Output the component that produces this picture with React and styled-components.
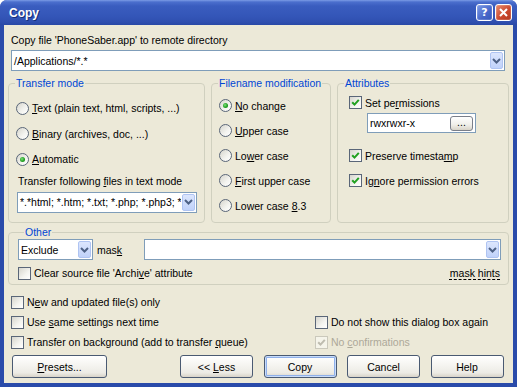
import React from "react";
import styled, { createGlobalStyle } from "styled-components";

const GlobalStyle = createGlobalStyle`
  html, body {
    margin: 0;
    padding: 0;
    background: #ffffff;
  }
  body {
    font-family: "Liberation Sans", Arial, sans-serif;
    font-size: 10.5px;
    color: #000;
  }
`;

const Check = ({ disabled }) => (
  <svg width="9" height="9" viewBox="0 0 9 9">
    <path
      d="M1.2 4.2 L3.5 6.6 L7.8 1.8"
      fill="none"
      stroke={disabled ? "#BEBCAF" : "#21A121"}
      strokeWidth="2"
    />
  </svg>
);

const Chevron = () => (
  <svg width="9" height="6" viewBox="0 0 9 6">
    <path d="M1 1 L4.5 4.5 L8 1" fill="none" stroke="#4D6185" strokeWidth="2" />
  </svg>
);

function Combo({ text, w, m, fill }) {
  return (
    <Field $w={w} $m={m} $fill={fill}>
      <FieldText>{text}</FieldText>
      <DropBtn>
        <Chevron />
      </DropBtn>
    </Field>
  );
}

function RadioOpt({ checked, children }) {
  return (
    <Option>
      <Radio $checked={checked} />
      <Label>{children}</Label>
    </Option>
  );
}

function CheckOpt({ checked, disabled, children }) {
  return (
    <Option $disabled={disabled}>
      <Box $disabled={disabled}>{checked && <Check disabled={disabled} />}</Box>
      <Label>{children}</Label>
    </Option>
  );
}

export default function App() {
  return (
    <>
      <GlobalStyle />
      <Window>
        <TitleBar>
          <Title>Copy</Title>
          <CapBtn>?</CapBtn>
          <CapBtn $close>
            <svg width="9" height="9" viewBox="0 0 9 9">
              <path d="M1 1 L8 8 M8 1 L1 8" stroke="#fff" strokeWidth="2" />
            </svg>
          </CapBtn>
        </TitleBar>
        <Body>
          <Caption>Copy file 'PhoneSaber.app' to remote directory</Caption>
          <Combo text="/Applications/*.*" m="3px 4px 0 3px" />

          <GroupRow>
            <Group $w={197}>
              <Legend>Transfer mode</Legend>
              <Stack $pad="10px 0 0 7px" $gap={9.5}>
                <RadioOpt>
                  <Key>T</Key>ext (plain text, html, scripts, ...)
                </RadioOpt>
                <RadioOpt>
                  <Key>B</Key>inary (archives, doc, ...)
                </RadioOpt>
                <RadioOpt checked>
                  <Key>A</Key>utomatic
                </RadioOpt>
              </Stack>
              <SubCaption>
                Transfer following <Key>f</Key>iles in text mode
              </SubCaption>
              <Combo text="*.*html; *.htm; *.txt; *.php; *.php3; *" m="4px 7px 0 8px" />
            </Group>

            <Group $w={120}>
              <Legend>Filename modification</Legend>
              <Stack $pad="7.5px 0 0 7px" $gap={9}>
                <RadioOpt checked>
                  <Key>N</Key>o change
                </RadioOpt>
                <RadioOpt>
                  <Key>U</Key>pper case
                </RadioOpt>
                <RadioOpt>
                  Lo<Key>w</Key>er case
                </RadioOpt>
                <RadioOpt>
                  <Key>F</Key>irst upper case
                </RadioOpt>
                <RadioOpt>
                  Lower case <Key>8</Key>.3
                </RadioOpt>
              </Stack>
            </Group>

            <Group $w={172}>
              <Legend>Attributes</Legend>
              <Stack $pad="4.5px 0 0 11px" $gap={0}>
                <CheckOpt checked>
                  Set pe<Key>r</Key>missions
                </CheckOpt>
                <PermEdit>
                  <FieldText>rwxrwxr-x</FieldText>
                  <SmallBtn>
                    <span>...</span>
                  </SmallBtn>
                </PermEdit>
                <Spacer $h={14.5} />
                <CheckOpt checked>
                  Preserve timesta<Key>m</Key>p
                </CheckOpt>
                <Spacer $h={9} />
                <CheckOpt checked>
                  Ig<Key>n</Key>ore permission errors
                </CheckOpt>
              </Stack>
            </Group>
          </GroupRow>

          <OtherGroup>
            <Legend>Other</Legend>
            <MaskRow>
              <Combo text="Exclude" w={75} />
              <MaskLabel>
                mas<Key>k</Key>
              </MaskLabel>
              <Combo text="" fill />
            </MaskRow>
            <HintRow>
              <CheckOpt>
                Clear source file 'Archi<Key>v</Key>e' attribute
              </CheckOpt>
              <Hints>mask hints</Hints>
            </HintRow>
          </OtherGroup>

          <Options>
            <CheckOpt>
              N<Key>e</Key>w and updated file(s) only
            </CheckOpt>
            <span />
            <CheckOpt>
              Use <Key>s</Key>ame settings next time
            </CheckOpt>
            <CheckOpt>Do not show this dialog box again</CheckOpt>
            <CheckOpt>
              Transfer on background (add to transfer <Key>q</Key>ueue)
            </CheckOpt>
            <CheckOpt checked disabled>
              No <Key>c</Key>onfirmations
            </CheckOpt>
          </Options>

          <ButtonBar>
            <Button $w={95}>
              <span>
                <Key>P</Key>resets...
              </span>
            </Button>
            <Grow />
            <Button>
              <span>
                &lt;&lt; <Key>L</Key>ess
              </span>
            </Button>
            <Button $default>
              <span>Copy</span>
            </Button>
            <Button>
              <span>Cancel</span>
            </Button>
            <Button>
              <span>Help</span>
            </Button>
          </ButtonBar>
        </Body>
      </Window>
    </>
  );
}

const Window = styled.div`
  width: 517px;
  height: 387px;
  display: flex;
  flex-direction: column;
  background: #2A4BAA;
  border-radius: 7px 7px 0 0;
  overflow: hidden;
`;

const TitleBar = styled.div`
  flex: none;
  height: 25px;
  display: flex;
  align-items: center;
  gap: 2px;
  padding: 0 5px 0 9px;
  background: linear-gradient(
    #7C9CE6 0px,
    #4B6FCD 2px,
    #3A5DBF 6px,
    #3456B8 16px,
    #2F4FAF 22px,
    #2848A6 25px
  );
`;

const Title = styled.div`
  flex: 1;
  color: #fff;
  font: bold 12px "Liberation Sans", Arial, sans-serif;
  text-shadow: 1px 1px 0 #16307A;
  padding-top: 1px;
`;

const CapBtn = styled.div`
  width: 15px;
  height: 15px;
  border: 1px solid #fff;
  border-radius: 3px;
  display: flex;
  align-items: center;
  justify-content: center;
  color: #fff;
  font: bold 11px "DejaVu Sans", sans-serif;
  background: ${(p) =>
    p.$close
      ? "linear-gradient(135deg, #E98C6E, #C9462C 60%, #B23A22)"
      : "linear-gradient(135deg, #7C9AE6, #4767C9 60%, #3858BA)"};
  box-shadow: inset 0 0 0 1px rgba(255, 255, 255, 0.15);
`;

const Body = styled.div`
  flex: 1;
  margin: 0 4px 4px;
  padding: 9px 4px 0;
  background: #ECE9D8;
  display: flex;
  flex-direction: column;
`;

const Caption = styled.div`
  line-height: 13px;
  height: 13px;
  margin-left: 3px;
`;

const SubCaption = styled.div`
  line-height: 13px;
  height: 13px;
  margin: 7.5px 0 0 9px;
  white-space: nowrap;
`;

const Field = styled.div`
  display: flex;
  align-items: center;
  box-sizing: border-box;
  height: 21px;
  flex: ${(p) => (p.$fill ? "1 1 0" : "none")};
  width: ${(p) => (p.$w ? `${p.$w}px` : "auto")};
  min-width: 0;
  background: #fff;
  border: 1px solid #7F9DB9;
  margin: ${(p) => p.$m || 0};
  overflow: hidden;
`;

const FieldText = styled.span`
  flex: 1;
  min-width: 0;
  padding-left: 2px;
  white-space: nowrap;
  overflow: hidden;
`;

const DropBtn = styled.span`
  flex: none;
  box-sizing: border-box;
  width: 13px;
  height: 17px;
  margin: 0 1px 0 1px;
  border: 1px solid #AFC4F2;
  border-radius: 2px;
  background: linear-gradient(#DCE6FD, #C0D2FA);
  display: flex;
  align-items: center;
  justify-content: center;
`;

const GroupRow = styled.div`
  display: flex;
  gap: 6px;
  height: 146px;
  flex-shrink: 0;
  margin-top: 6px;
`;

const Group = styled.fieldset`
  box-sizing: border-box;
  margin: 0;
  padding: 0;
  min-width: 0;
  width: ${(p) => p.$w}px;
  border: 1px solid #D0D0BF;
  border-radius: 4px;
  display: flex;
  flex-direction: column;
`;

const OtherGroup = styled(Group)`
  width: auto;
  height: 59px;
  flex-shrink: 0;
  margin-top: 3px;
  padding: 0 7px 0 9px;
`;

const Legend = styled.legend`
  margin-left: 6px;
  padding: 0 1px;
  line-height: 13px;
  color: #0046D5;
`;

const Stack = styled.div`
  display: flex;
  flex-direction: column;
  align-items: flex-start;
  gap: ${(p) => p.$gap}px;
  padding: ${(p) => p.$pad};
`;

const Spacer = styled.div`
  height: ${(p) => p.$h}px;
`;

const Option = styled.div`
  display: flex;
  align-items: center;
  height: 16px;
  white-space: nowrap;
  color: ${(p) => (p.$disabled ? "#ACA899" : "#000")};
`;

const Label = styled.span`
  margin-left: 3px;
`;

const Key = styled.u`
  text-underline-offset: 1px;
`;

const Radio = styled.span`
  position: relative;
  flex: none;
  box-sizing: border-box;
  width: 13px;
  height: 13px;
  border-radius: 50%;
  border: 1px solid #5A6678;
  background: linear-gradient(135deg, #D6D5CD, #F4F4F0 60%, #FFFFFF);
  &::after {
    content: "";
    display: ${(p) => (p.$checked ? "block" : "none")};
    position: absolute;
    left: 3px;
    top: 3px;
    width: 5px;
    height: 5px;
    border-radius: 50%;
    background: radial-gradient(circle at 40% 40%, #7FE07F, #21A121 55%, #178017);
  }
`;

const Box = styled.span`
  flex: none;
  box-sizing: border-box;
  width: 13px;
  height: 13px;
  border: 1px solid ${(p) => (p.$disabled ? "#CAC8BB" : "#5A6678")};
  background: ${(p) =>
    p.$disabled ? "#F5F4EA" : "linear-gradient(135deg, #D6D5CD, #F4F4F0 60%, #FFFFFF)"};
  display: flex;
  align-items: center;
  justify-content: center;
`;

const PermEdit = styled.div`
  display: flex;
  align-items: center;
  box-sizing: border-box;
  width: 109px;
  height: 20px;
  margin: 2.5px 0 0 18px;
  background: #fff;
  border: 1px solid #7F9DB9;
`;

const SmallBtn = styled.span`
  flex: none;
  box-sizing: border-box;
  width: 23px;
  height: 15px;
  margin-right: 2px;
  border: 1px solid #7A7F8A;
  border-radius: 3px;
  background: linear-gradient(#FFFFFF, #F0EFEA 60%, #D8D3C8);
  display: flex;
  align-items: center;
  justify-content: center;
  line-height: 10px;
  padding-bottom: 3px;
`;

const MaskRow = styled.div`
  display: flex;
  align-items: center;
`;

const MaskLabel = styled.span`
  width: 47px;
  margin-left: 4px;
`;

const HintRow = styled.div`
  display: flex;
  align-items: center;
  justify-content: space-between;
  margin-top: 5px;
`;

const Hints = styled.span`
  text-decoration: underline dashed;
  text-underline-offset: 2px;
  margin-right: 1px;
`;

const Options = styled.div`
  display: grid;
  grid-template-columns: 304px 1fr;
  row-gap: 4px;
  margin: 9px 0 0 3px;
`;

const ButtonBar = styled.div`
  display: flex;
  gap: 10.5px;
  margin: 5px 5.5px 0 4px;
`;

const Grow = styled.div`
  flex: 1;
`;

const Button = styled.div`
  flex: none;
  box-sizing: border-box;
  width: ${(p) => p.$w || 73}px;
  height: 23px;
  border: 1px solid #4A5A72;
  border-radius: 3px;
  background: linear-gradient(#FFFFFF, #F5F4F0 45%, #ECEBE5 80%, #D8D3C8);
  display: flex;
  align-items: center;
  justify-content: center;
  box-shadow: ${(p) =>
    p.$default ? "inset 0 0 0 1px #C8DCFA, inset 0 0 0 2px #8FB0EA" : "none"};
`;
